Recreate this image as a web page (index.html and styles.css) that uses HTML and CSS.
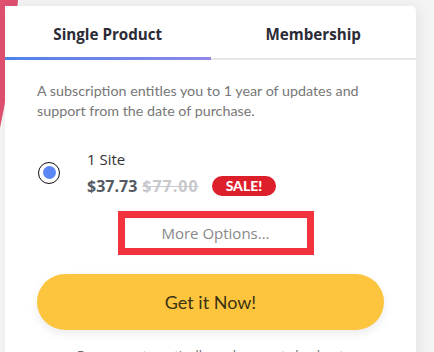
FILE: index.html
```html
<!DOCTYPE html>
<html>
<head>
<meta charset="utf-8">
<link rel="stylesheet" href="styles.css">
</head>
<body>
<div class="deco"></div>
<div class="card">
  <div class="tabs">
    <div class="tab active">Single Product</div>
    <div class="tab">Membership</div>
  </div>
  <div class="body">
    <p class="desc">A subscription entitles you to 1 year of updates and support from the date of purchase.</p>
    <div class="option">
      <span class="radio"><span class="dot"></span></span>
      <div class="info">
        <div class="name">1 Site</div>
        <div class="price-row">
          <span class="price">$37.73</span>
          <span class="old">$77.00</span>
          <span class="sale">SALE!</span>
        </div>
      </div>
    </div>
    <div class="more-wrap">
      <div class="more">More Options...</div>
    </div>
    <div class="cta">Get it Now!</div>
    <p class="foot">Renews automatically each year at checkout</p>
  </div>
</div>
</body>
</html>
```
FILE: styles.css
```css
html, body {
  margin: 0;
  padding: 0;
}
body {
  width: 434px;
  height: 352px;
  overflow: hidden;
  background: #f4f4f4;
  position: relative;
  font-family: "Open Sans", sans-serif;
}
.deco {
  position: absolute;
  left: 0;
  top: 0;
  width: 20px;
  height: 130px;
  background: #df4f70;
  clip-path: polygon(0 0, 18px 0, 15px 30px, 10px 70px, 4px 108px, 0 128px);
}
.card {
  position: relative;
  margin: 6px 0 0 5px;
  width: 411px;
  height: 360px;
  background: #fff;
  border-radius: 0 5px 0 0;
  box-shadow: 4px 0 14px rgba(0,0,0,0.06);
}
.tabs {
  display: grid;
  grid-template-columns: 1fr 1fr;
  border-bottom: 2px solid #e8e8e8;
}
.tab {
  height: 46px;
  padding-top: 5px;
  display: flex;
  align-items: center;
  justify-content: center;
  font-size: 15.2px;
  font-weight: 700;
  color: #2b2b35;
  margin-bottom: -2px;
  border-bottom: 3px solid transparent;
}
.tab.active {
  border-image: linear-gradient(90deg, #4f83e6, #8f87ea) 1;
  border-bottom: 3px solid;
}
.desc {
  margin: 21px 0 0;
  font-family: Lato, sans-serif;
  font-size: 14.3px;
  line-height: 20px;
  color: #777;
}
.body {
  padding: 0 32px;
}
.option {
  display: flex;
  align-items: center;
  margin-top: 27px;
}
.radio {
  width: 20px;
  height: 20px;
  border: 1px solid #111;
  border-radius: 50%;
  display: flex;
  align-items: center;
  justify-content: center;
  margin-left: 1px;
}
.dot {
  width: 13px;
  height: 13px;
  border-radius: 50%;
  background: #5b87f6;
}
.info {
  margin-left: 27px;
}
.name {
  font-size: 15px;
  line-height: 22px;
  color: #333;
}
.price-row {
  display: flex;
  align-items: center;
  margin-top: 5px;
}
.price {
  font-size: 16px;
  font-weight: 700;
  color: #555a63;
}
.old {
  margin-left: 5px;
  font-size: 16px;
  font-weight: 700;
  letter-spacing: 1px;
  color: #c8c8cc;
  text-decoration: line-through;
}
.sale {
  margin-left: 13px;
  background: #dd1f2c;
  color: #fff;
  font-family: Lato, sans-serif;
  font-weight: 900;
  font-size: 14px;
  line-height: 20px;
  padding: 0 14px;
  border-radius: 10px;
}
.more-wrap {
  display: flex;
  justify-content: center;
  padding-left: 10px;
  margin-top: 14px;
}
.more {
  width: 182px;
  height: 30px;
  border: 7px solid #f2333d;
  display: flex;
  align-items: center;
  justify-content: center;
  font-size: 15px;
  color: #888;
  background: #fff;
}
.cta {
  margin-top: 19px;
  height: 56px;
  border-radius: 28px;
  background: #fdc53d;
  display: flex;
  align-items: center;
  justify-content: center;
  font-family: Lato, sans-serif;
  font-size: 18px;
  color: #3b3216;
  box-shadow: 0 4px 10px rgba(0,0,0,0.08);
}
.foot {
  margin: 16px 0 0;
  text-align: center;
  font-size: 13px;
  color: #666;
}
```
